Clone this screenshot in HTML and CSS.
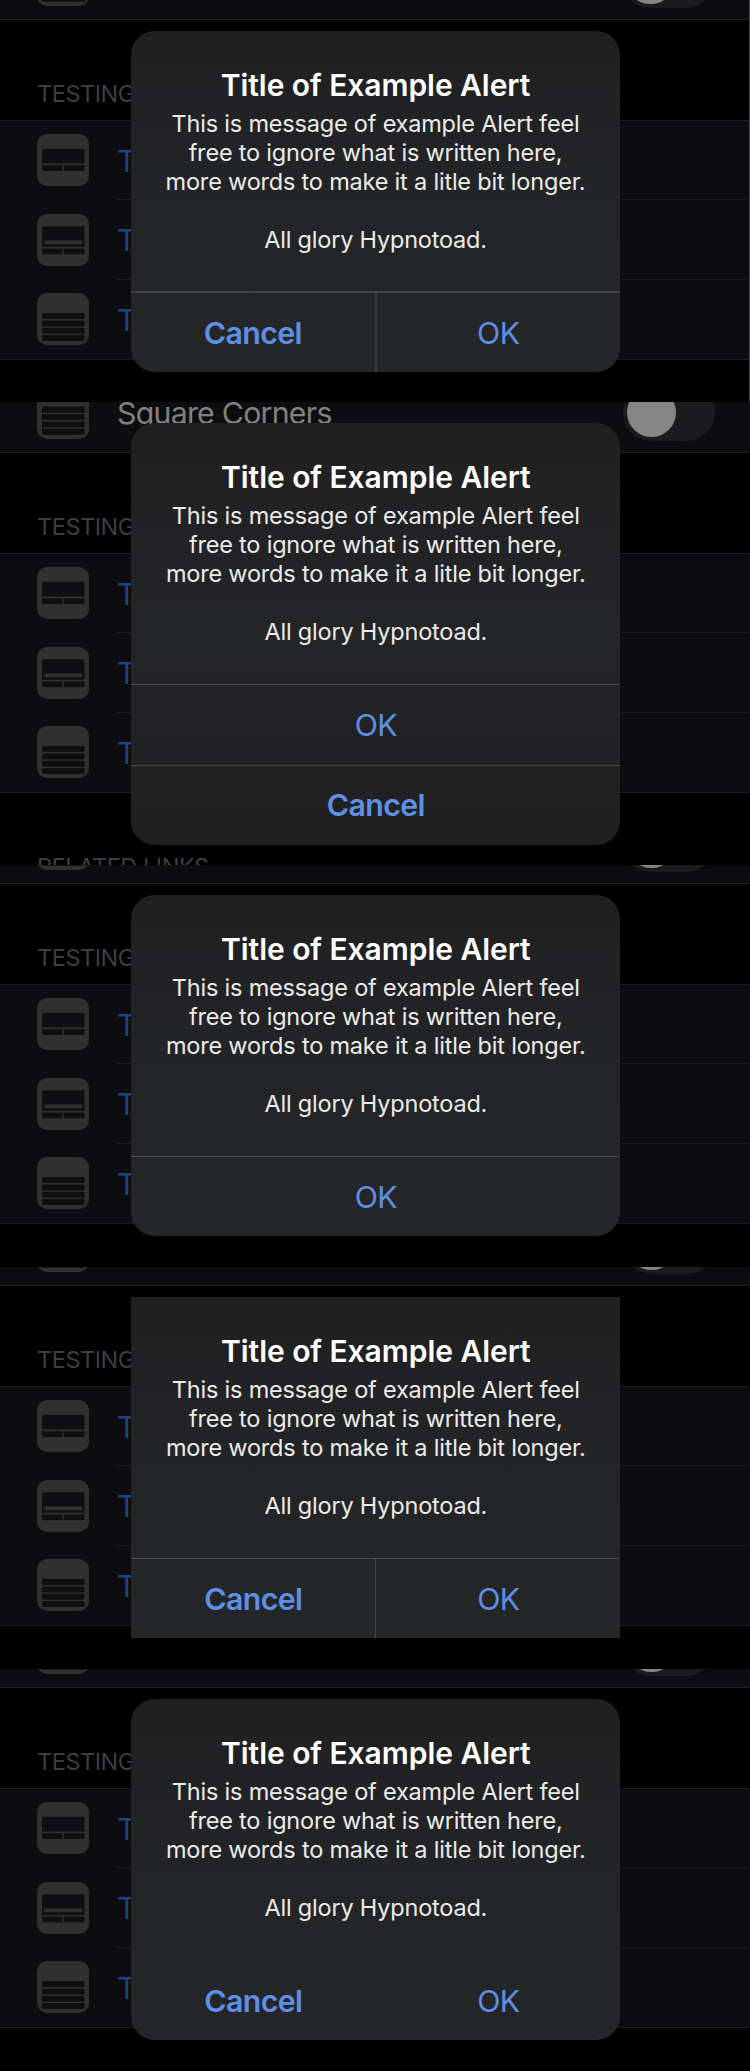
FILE: index.html
```
<!DOCTYPE html>
<html lang="en">
<head>
<meta charset="utf-8">
<title>Alert examples</title>
<link rel="stylesheet" href="styles.css">
<script src="app.js" defer></script>
</head>
<body>
<svg class="defs" width="0" height="0">
  <symbol id="i-two" viewBox="0 0 52 52"><rect class="tile" width="52" height="52" rx="10"/><path class="cut" d="M5 16.5q0-1.8 1.8-1.8h39q1.8 0 1.8 1.8v13H5zM5 31.2h20.4V37H7q-2 0-2-2zM26.8 31.2h20.8V35q0 2-2 2H26.8z"/></symbol>
  <symbol id="i-field" viewBox="0 0 52 52"><rect class="tile" width="52" height="52" rx="10"/><path class="cut" d="M5 14.1q0-1.8 1.8-1.8h39q1.8 0 1.8 1.8v18.6H5zM5 34.4h20.4v5.8H7q-2 0-2-2zM26.8 34.4h20.8v3.8q0 2-2 2H26.8z"/><rect class="tile" x="7.2" y="26.6" width="38.2" height="3.6" rx="1"/></symbol>
  <symbol id="i-list" viewBox="0 0 52 52"><rect class="tile" width="52" height="52" rx="10"/><g class="cut"><rect x="5" y="20" width="42.6" height="6.1" rx="1.8"/><rect x="5" y="27.5" width="42.6" height="6" rx="1.8"/><rect x="5" y="34.8" width="42.6" height="6" rx="1.8"/><rect x="5" y="42.1" width="42.6" height="6" rx="1.8"/></g></symbol>
  <symbol id="i-square" viewBox="0 0 52 52"><rect class="tile" width="52" height="52" rx="10"/><path class="cut" d="M5 19.6h42.6v6.1H5zM5 27.1h42.6v6H5zM5 34.4h42.6v6H5zM5 41.7h42.6v6H5z"/></symbol>
</svg>
<main id="screens"></main>
</body>
</html>
```
FILE: styles.css
```
* { box-sizing: border-box; }
body { margin: 0; background: #000; font-family: Inter, "Liberation Sans", sans-serif; }
.defs { position: absolute; }
#screens { display: flex; flex-direction: column; height: 2071px; overflow: hidden; }
.screen { position: relative; flex: none; overflow: hidden; height: 402px; background: #000; }
.screen.first { border-right: 1px solid #4a4a4a; }
.page { margin-top: -61px; }
.first .page { margin-top: -60px; }
.tall .page { margin-top: -29px; }
.tile { fill: #303031; }
.cut { fill: #0f0f11; }
.row { display: flex; align-items: center; height: 80px; padding: 0 35px 0 37px; background: #0d0d0f; }
.row svg { width: 52px; height: 52px; flex: none; }
.row-label { flex: 1; align-self: stretch; margin-left: 27px; margin-right: -35px; padding: 20px 0 0 1px; font-size: 30.3px; line-height: 40px; letter-spacing: -0.75px; color: #1c4480; border-bottom: 1px solid #1b1b1d; }
.setting { border-bottom: 1px solid #202022; }
.setting .row-label { color: #818182; border: 0; margin-right: 0; }
.toggle { width: 92px; height: 56px; padding: 3.5px; border-radius: 28px; background: #1b1b1d; }
.knob { width: 49px; height: 49px; border-radius: 50%; background: #868686; }
.heading { height: 100px; padding: 58px 0 0 37px; font-size: 23.5px; line-height: 32px; color: #3e3e40; letter-spacing: -0.45px; }
.group { border-top: 1px solid #1d1d1f; border-bottom: 1px solid #1d1d1f; background: #0d0d0f; }
.group .row { height: 80px; background: none; }
.group .row:first-child, .group .row:last-child { height: 79px; }
.group svg { margin-top: -1px; }
.group .row:last-child .row-label { border: 0; }
.alert { position: absolute; left: 131.3px; top: 30px; width: 489px; height: 341px; display: flex; flex-direction: column; border-radius: 24px; background: linear-gradient(#202021, #232426 45%, #252628); overflow: hidden; text-align: center; }
.first .alert { left: 131px; top: 31px; }
.tall .alert { top: 21px; height: 422px; background: linear-gradient(#202021, #242527 50%, #202021); }
.square .alert { border-radius: 0; }
.copy { height: 261px; padding-top: 34px; }
.first .copy { height: 260px; }
.title { margin: 0; font-size: 30px; line-height: 40px; font-weight: 600; color: #fff; letter-spacing: -0.05px; }
.message { margin: 4px 0 0; font-size: 23.5px; line-height: 29px; color: #ececec; letter-spacing: -0.2px; white-space: pre-line; }
.buttons { flex: 1; display: flex; border-top: 1px solid #4b4c4e; }
.button { flex: 1; padding: 0; font: 400 30.3px/76px Inter, "Liberation Sans", sans-serif; letter-spacing: -0.6px; color: #5d8fe4; background: none; border: 0; }
.button + .button { border-left: 1px solid #444547; }
.first .buttons { border-top: 2px solid #414244; }
.first .button + .button { border-left: 2px solid #38393b; }
.button.cancel { font-weight: 600; }
.stacked { flex-direction: column; }
.stacked .button + .button { border-left: 0; border-top: 1px solid #4b4c4e; }
.borderless .buttons, .borderless .button + .button { border-color: transparent; }
```
FILE: app.js
```
const cancel = ['Cancel', 'cancel'], ok = ['OK', ''];
const screens = [
  { kind: 'first', buttons: [cancel, ok] },
  { kind: 'tall', height: 463, stacked: true, buttons: [ok, cancel] },
  { kind: '', buttons: [ok] },
  { kind: 'square', buttons: [cancel, ok] },
  { kind: 'borderless', buttons: [cancel, ok] }
];
const icon = id => `<svg><use href="#${id}"/></svg>`;
const row = id => `<div class="row">${icon(id)}<div class="row-label">T</div></div>`;
document.getElementById('screens').innerHTML = screens.map(s => `
  <section class="screen ${s.kind}" style="height:${s.height || 402}px">
    <div class="page">
      <div class="row setting">${icon('i-square')}<div class="row-label">${s.stacked ? 'Square Corners' : ''}</div><div class="toggle"><div class="knob"></div></div></div>
      <div class="heading">TESTING</div>
      <div class="group">${['i-two', 'i-field', 'i-list'].map(row).join('')}</div>
      ${s.stacked ? '<div class="heading">RELATED LINKS</div>' : ''}
    </div>
    <div class="alert">
      <div class="copy">
        <h2 class="title">Title of Example Alert</h2>
        <p class="message">This is message of example Alert feel
free to ignore what is written here,
more words to make it a litle bit longer.

All glory Hypnotoad.</p>
      </div>
      <div class="buttons ${s.stacked ? 'stacked' : ''}">${s.buttons.map(([t, c]) => `<button class="button ${c}">${t}</button>`).join('')}</div>
    </div>
  </section>`).join('');
```
